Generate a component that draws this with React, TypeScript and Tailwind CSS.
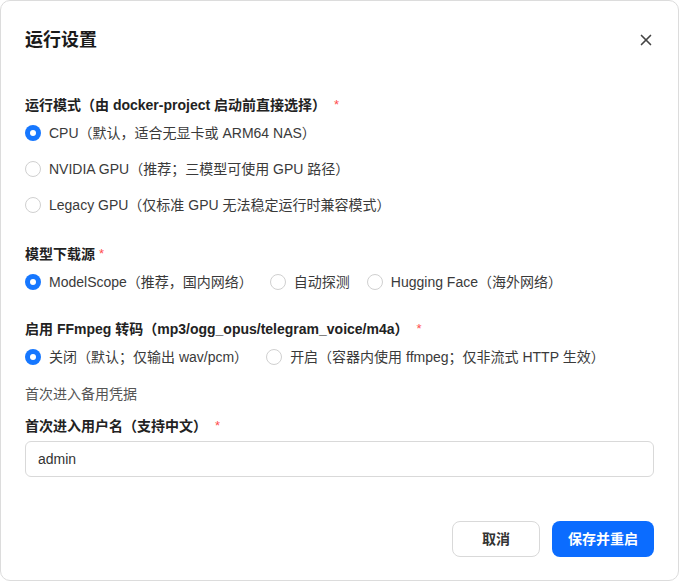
import React, { useState } from 'react';
import { X } from 'lucide-react';

const font = { fontFamily: '"Liberation Sans", "Noto Sans CJK SC", sans-serif' };

const Radio: React.FC<{ checked: boolean; label: string; onClick: () => void }> = ({ checked, label, onClick }) => (
    <label onClick={onClick} className="flex items-center gap-2 h-6 cursor-pointer text-[14px] text-[#3a3a3a] whitespace-nowrap">
        {checked ? (
            <span className="w-4 h-4 rounded-full bg-[#1677ff] flex items-center justify-center">
                <span className="w-[6px] h-[6px] rounded-full bg-white" />
            </span>
        ) : (
            <span className="w-4 h-4 rounded-full border border-[#d0d0d0] bg-white" />
        )}
        <span>{label}</span>
    </label>
);

const Label: React.FC<{ text: string; gap?: boolean }> = ({ text, gap = true }) => (
    <div className="h-5 flex items-center text-[14px] font-bold text-[#222]">
        <span>{text}</span>
        <span className={`text-[#ff4d4f] font-normal text-[13px] ${gap ? 'ml-2' : 'ml-1'}`}>*</span>
    </div>
);

export default function App() {
    const [mode, setMode] = useState('cpu');
    const [source, setSource] = useState('ms');
    const [ffmpeg, setFfmpeg] = useState('off');
    const [user, setUser] = useState('admin');

    return (
        <div style={font} className="w-[680px] h-[582px] bg-white">
            <div className="w-[679px] h-[581px] border border-[#dcdcdc] rounded-[10px] bg-white flex flex-col px-6 pt-[26px]">
                <div className="h-[26px] flex items-center justify-between">
                    <h2 className="text-[18px] font-bold text-[#1a1a1a]">运行设置</h2>
                    <button className="w-8 h-8 -mr-2 flex items-center justify-center text-[#444]">
                        <X size={18} strokeWidth={2.2} />
                    </button>
                </div>

                <div className="mt-[42px]">
                    <Label text="运行模式（由 docker-project 启动前直接选择）" />
                </div>
                <div className="mt-[6px] flex flex-col gap-3">
                    <Radio checked={mode === 'cpu'} onClick={() => setMode('cpu')} label="CPU（默认，适合无显卡或 ARM64 NAS）" />
                    <Radio checked={mode === 'nvidia'} onClick={() => setMode('nvidia')} label="NVIDIA GPU（推荐；三模型可使用 GPU 路径）" />
                    <Radio checked={mode === 'legacy'} onClick={() => setMode('legacy')} label="Legacy GPU（仅标准 GPU 无法稳定运行时兼容模式）" />
                </div>

                <div className="mt-[27px]">
                    <Label text="模型下载源" gap={false} />
                </div>
                <div className="mt-[6px] flex items-center gap-[17px]">
                    <Radio checked={source === 'ms'} onClick={() => setSource('ms')} label="ModelScope（推荐，国内网络）" />
                    <Radio checked={source === 'auto'} onClick={() => setSource('auto')} label="自动探测" />
                    <Radio checked={source === 'hf'} onClick={() => setSource('hf')} label="Hugging Face（海外网络）" />
                </div>

                <div className="mt-[25px]">
                    <Label text="启用 FFmpeg 转码（mp3/ogg_opus/telegram_voice/m4a）" />
                </div>
                <div className="mt-[6px] flex items-center gap-[18px]">
                    <Radio checked={ffmpeg === 'off'} onClick={() => setFfmpeg('off')} label="关闭（默认；仅输出 wav/pcm）" />
                    <Radio checked={ffmpeg === 'on'} onClick={() => setFfmpeg('on')} label="开启（容器内使用 ffmpeg；仅非流式 HTTP 生效）" />
                </div>

                <div className="mt-[15px] h-5 flex items-center text-[14px] text-[#555]">首次进入备用凭据</div>

                <div className="mt-[12px]">
                    <Label text="首次进入用户名（支持中文）" />
                </div>
                <input
                    value={user}
                    onChange={(e) => setUser(e.target.value)}
                    className="mt-[5px] h-9 w-full px-3 border border-[#d9d9d9] rounded-md text-[14px] text-[#333] outline-none"
                />

                <div className="mt-[44px] flex justify-end gap-3">
                    <button className="w-[88px] h-[36px] border border-[#d9d9d9] rounded-lg bg-white text-[14px] font-bold text-[#333]">
                        取消
                    </button>
                    <button className="w-[102px] h-[36px] rounded-lg bg-[#0b6cff] text-[14px] font-bold text-white">
                        保存并重启
                    </button>
                </div>
            </div>
        </div>
    );
}
